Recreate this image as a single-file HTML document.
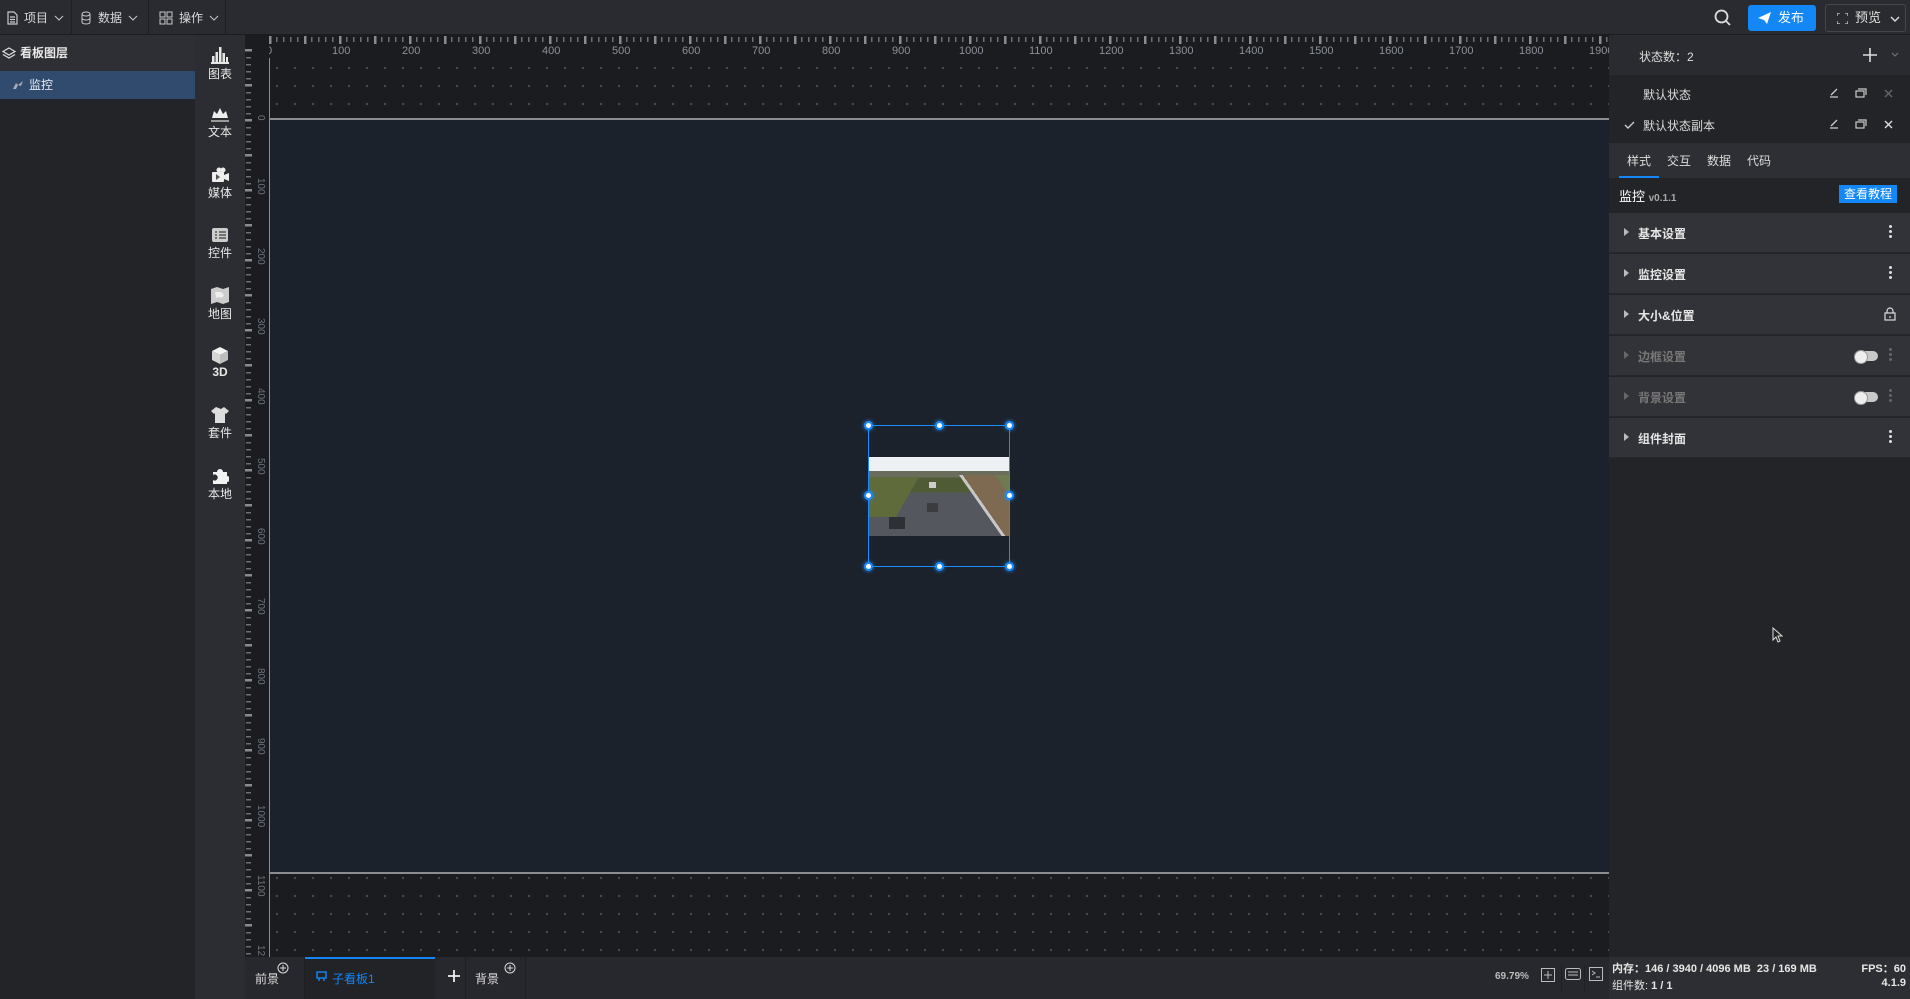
<!DOCTYPE html>
<html><head><meta charset="utf-8"><style>
*{margin:0;padding:0;box-sizing:border-box}
body{width:1910px;height:999px;overflow:hidden;background:#1b1c1f;font-family:"Liberation Sans","Noto Sans CJK SC",sans-serif;font-size:12px;color:#d8d9dc;position:relative}
.abs{position:absolute}
#top{left:0;top:0;width:1910px;height:35px;background:#2a2b30;border-bottom:1px solid #1b1c1f}
.menu{top:0;height:35px;display:flex;align-items:center;gap:6px;color:#d8d9dc;font-size:12px;white-space:nowrap;border-right:1px solid #1f2024;padding-left:6px}
.menu svg{stroke:#c8c9cc;fill:none;flex:none}
#layers{left:0;top:35px;width:195px;height:964px;background:#232427}
#iconbar{left:195px;top:35px;width:50px;height:964px;background:#2c2d32}
.ib{position:absolute;left:0;width:50px;text-align:center;font-size:12px;color:#e8e8e8}
.ib svg{display:block;margin:0 auto 1px}
#hr{left:245px;top:35px;width:1364px;height:22px;background:#1b1c1f}
#vr{left:245px;top:35px;width:24px;height:922px;background:#1b1c1f}
#grid{left:269px;top:57px;width:1340px;height:900px;background-color:#1b1c1f;background-image:radial-gradient(circle,#4a4c50 1px,transparent 1.3px);background-size:18px 18px;background-position:-1px 2px}
#canvas{left:269px;top:118px;width:1340px;height:756px;background:#1c222b;border-top:2px solid #8a8c90;border-bottom:2px solid #8a8c90}
#right{left:1609px;top:35px;width:301px;height:922px;background:#232427}
.sec{position:absolute;left:0;width:301px;height:40px;background:#323338;border-bottom:1px solid #26272b;font-weight:bold;font-size:12px;color:#e6e6e6}
.sec .t{position:absolute;left:29px;top:12px}
.sec .ar{position:absolute;left:15px;top:15px;width:0;height:0;border-left:5px solid #bbb;border-top:4px solid transparent;border-bottom:4px solid transparent}
.dots{position:absolute;right:18px;top:12px;width:3px}
.dots i{display:block;width:3px;height:3px;border-radius:50%;background:#ddd;margin-bottom:2px}
.tog{position:absolute;right:32px;top:15px;width:23px;height:10px;border-radius:5px;background:#c9c9c9}
.tog:before{content:"";position:absolute;left:-1px;top:-1px;width:12px;height:12px;border-radius:50%;background:#eee;border:1px solid #999}
#bot{left:245px;top:957px;width:1364px;height:42px;background:#27282d}
#stat{left:1609px;top:957px;width:301px;height:42px;background:#2d2e33;font-weight:bold;font-size:11px;color:#e6e6e6}
.h{position:absolute;width:9px;height:9px;border-radius:50%;background:#fff;border:2px solid #1a8cff;box-shadow:0 0 4px #1a8cff}
.hl span{position:absolute;top:0}
.vl span{position:absolute;left:0;writing-mode:vertical-rl}
</style></head><body>

<div id="top" class="abs">
 <div class="menu abs" style="left:0;width:72px"><svg width="12" height="14"><path d="M2 1h6l3 3v9H2z M4 6h5M4 8.5h5M4 11h5" stroke-width="1.2"/></svg>项目<svg width="10" height="8"><path d="M1 2l4 4 4-4"/></svg></div>
 <div class="menu abs" style="left:72px;width:77px;padding-left:8px"><svg width="12" height="14"><ellipse cx="6" cy="3" rx="4" ry="2"/><path d="M2 3v8c0 2.6 8 2.6 8 0V3M2 7c0 2.6 8 2.6 8 0"/></svg>数据<svg width="10" height="8"><path d="M1 2l4 4 4-4"/></svg></div>
 <div class="menu abs" style="left:149px;width:77px;padding-left:10px"><svg width="14" height="14"><rect x="1" y="1" width="5" height="5"/><rect x="8" y="1" width="5" height="5"/><rect x="1" y="8" width="5" height="5"/><rect x="8" y="8" width="5" height="5"/></svg>操作<svg width="10" height="8"><path d="M1 2l4 4 4-4"/></svg></div>
 <svg class="abs" style="left:1714px;top:9px" width="17" height="17"><circle cx="7.5" cy="7.5" r="6" stroke="#ddd" stroke-width="1.8" fill="none"/><path d="M12 12l4 4" stroke="#ddd" stroke-width="1.8"/></svg>
 <div class="abs" style="left:1748px;top:5px;width:68px;height:26px;background:#1487f7;border-radius:3px;color:#fff;font-size:13px;line-height:26px;padding-left:30px"><svg class="abs" style="left:10px;top:7px" width="13" height="12"><path d="M0 6L13 0 9 12 6 8z" fill="#fff"/></svg>发布</div>
 <div class="abs" style="left:1825px;top:4px;width:81px;height:28px;border:1px solid #45464b;border-radius:3px;color:#e0e0e0;font-size:13px;line-height:26px;padding-left:29px">预览<svg class="abs" style="left:11px;top:8px" width="11" height="11" fill="none" stroke="#ccc" stroke-width="1.3"><path d="M0 3V0h3M8 0h3v3M11 8v3H8M3 11H0V8"/></svg><svg class="abs" style="left:64px;top:10px" width="10" height="8" fill="none" stroke="#ddd" stroke-width="1.4"><path d="M1 2l4 4 4-4"/></svg></div>
</div>

<div id="layers" class="abs">
 <div class="abs" style="left:0;top:0;width:195px;height:36px;background:#2e2f34;font-weight:bold;font-size:12px;color:#e8e8e8;line-height:36px;padding-left:20px">看板图层<svg class="abs" style="left:2px;top:12px" width="14" height="12" fill="none" stroke="#ddd" stroke-width="1.2"><path d="M7 1l6 3.5-6 3.5-6-3.5z M1 7.5L7 11l6-3.5"/></svg></div>
 <div class="abs" style="left:0;top:36px;width:195px;height:28px;background:#304b6d;color:#e8eef6;font-size:12px;line-height:28px;padding-left:29px">监控<svg class="abs" style="left:12px;top:9px" width="13" height="10" fill="#aab"><path d="M1 9l3-6 2 2 5-4-2 5-3-1-2 4z"/></svg></div>
</div>

<div id="iconbar" class="abs">
 <div class="ib" style="top:12px"><svg width="18" height="17" fill="#e6e6e6"><rect x="1" y="9" width="2.5" height="6"/><rect x="4.5" y="5" width="2.5" height="10"/><rect x="8" y="0" width="2.5" height="15"/><rect x="11.5" y="6" width="2.5" height="9"/><rect x="15" y="10" width="2" height="5"/><rect x="0" y="15" width="18" height="2"/></svg>图表</div>
 <div class="ib" style="top:72px"><svg width="18" height="15" fill="#eee"><path d="M1 11l2-7 3 3 3-6 3 6 3-3 2 7z"/><rect x="0" y="13" width="18" height="2" fill="#999"/></svg>文本</div>
 <div class="ib" style="top:132px"><svg width="18" height="16" fill="#eee"><circle cx="8" cy="3" r="2.5"/><circle cx="12" cy="3" r="2.5"/><rect x="1" y="5" width="12" height="10" rx="1"/><path d="M13 8l5-2v8l-5-2z"/><path d="M5 7v6l4-3z" fill="#555"/></svg>媒体</div>
 <div class="ib" style="top:192px"><svg width="18" height="16"><rect x="1" y="1" width="16" height="14" rx="2" fill="#ccc"/><path d="M4 5h2M8 5h7M4 8h2M8 8h7M4 11h2M8 11h7" stroke="#555" stroke-width="1.4"/></svg>控件</div>
 <div class="ib" style="top:252px"><svg width="18" height="17" fill="#ccc"><path d="M0 2l6-2 6 2 6-2v15l-6 2-6-2-6 2z"/><path d="M4 5h6l3 3-2 3-3-1-3 1z" fill="#eee"/></svg>地图</div>
 <div class="ib" style="top:312px"><svg width="18" height="17"><path d="M9 0l8 4-8 4-8-4z" fill="#f2f2f2"/><path d="M1 4l8 4v9l-8-4z" fill="#d6d6d6"/><path d="M17 4l-8 4v9l8-4z" fill="#bdbdbd"/></svg><b>3D</b></div>
 <div class="ib" style="top:372px"><svg width="18" height="16" fill="#ddd"><path d="M5 0L0 4l3 3 1-1v10h10V6l1 1 3-3-5-4-3 2z"/></svg>套件</div>
 <div class="ib" style="top:432px"><svg width="18" height="17" fill="#f2f2f2"><path d="M2 5h4a3 3 0 1 1 6 0h4v4a3 3 0 1 1 0 6v2H2v-4a3 3 0 1 0 0-5z"/></svg>本地</div>
</div>

<div id="grid" class="abs"></div>
<div id="canvas" class="abs"></div>
<div class="abs" style="left:268px;top:58px;width:2px;height:899px;background:#8a8c90"></div>

<div id="hr" class="abs">
 <div class="abs" style="left:24px;top:2px;width:1340px;height:5px;background:repeating-linear-gradient(90deg,#6e6f73 0 1.5px,transparent 1.5px 7px)"></div>
 <div class="abs" style="left:24px;top:1px;width:1340px;height:8px;background:repeating-linear-gradient(90deg,#8a8b8f 0 2.5px,transparent 2.5px 35px)"></div>
 <div class="abs hl" style="left:0;top:10px;width:1364px;height:14px;color:#8c9098;font-size:11px">
  <span style="left:21px">0</span><span style="left:87px">100</span><span style="left:157px">200</span><span style="left:227px">300</span><span style="left:297px">400</span><span style="left:367px">500</span><span style="left:437px">600</span><span style="left:507px">700</span><span style="left:577px">800</span><span style="left:647px">900</span><span style="left:714px">1000</span><span style="left:784px">1100</span><span style="left:854px">1200</span><span style="left:924px">1300</span><span style="left:994px">1400</span><span style="left:1064px">1500</span><span style="left:1134px">1600</span><span style="left:1204px">1700</span><span style="left:1274px">1800</span><span style="left:1344px">1900</span>
 </div>
</div>
<div id="vr" class="abs">
 <div class="abs" style="left:1px;top:22px;width:5px;height:900px;background:repeating-linear-gradient(180deg,#6e6f73 0 1.5px,transparent 1.5px 7px)"></div>
 <div class="abs" style="left:0;top:14px;width:7px;height:908px;background:repeating-linear-gradient(180deg,#8a8b8f 0 2.5px,transparent 2.5px 35px)"></div>
 <div class="abs vl" style="left:10px;top:0;width:14px;height:922px;color:#6e727a;font-size:10px">
  <span style="top:80px">0</span><span style="top:143px">100</span><span style="top:213px">200</span><span style="top:283px">300</span><span style="top:353px">400</span><span style="top:423px">500</span><span style="top:493px">600</span><span style="top:563px">700</span><span style="top:633px">800</span><span style="top:703px">900</span><span style="top:770px">1000</span><span style="top:840px">1100</span><span style="top:910px">12</span>
 </div>
</div>

<!-- component -->
<div class="abs" style="left:868px;top:425px;width:142px;height:142px;border:1.5px solid #1a8cff"></div>
<div class="abs" style="left:869px;top:457px;width:140px;height:79px;overflow:hidden;background:linear-gradient(180deg,#eef1f4 0 18%,#6a6d5c 18% 26%,#4f5b35 26% 45%,#54585e 45%)">
 <div class="abs" style="left:0;top:20px;width:50px;height:40px;background:#5f6b3a;transform:skewX(-30deg);transform-origin:0 0"></div>
 <div class="abs" style="left:90px;top:18px;width:60px;height:62px;background:linear-gradient(90deg,#c8c8c8 0 6%,#7d6a50 6% 60%,#6f7a50 60%);transform:skewX(35deg);transform-origin:0 0"></div>
 <div class="abs" style="left:20px;top:60px;width:16px;height:12px;background:#2d3035"></div>
 <div class="abs" style="left:58px;top:46px;width:11px;height:9px;background:#3a3c40"></div>
 <div class="abs" style="left:60px;top:25px;width:7px;height:6px;background:#ccc"></div>
</div>
<div class="h" style="left:864px;top:421px"></div><div class="h" style="left:935px;top:421px"></div><div class="h" style="left:1005px;top:421px"></div>
<div class="h" style="left:864px;top:491px"></div><div class="h" style="left:1005px;top:491px"></div>
<div class="h" style="left:864px;top:562px"></div><div class="h" style="left:935px;top:562px"></div><div class="h" style="left:1005px;top:562px"></div>

<!-- right panel -->
<div id="right" class="abs">
 <div class="abs" style="left:0;top:0;width:301px;height:40px;background:#2a2b30"><span class="abs" style="left:30px;top:13px;font-size:12px;color:#ddd">状态数：2</span>
  <svg class="abs" style="left:254px;top:13px" width="14" height="14" stroke="#ddd" stroke-width="1.6"><path d="M7 0v14M0 7h14"/></svg>
  <svg class="abs" style="left:282px;top:17px" width="8" height="6" stroke="#777" fill="none"><path d="M1 1l3 3 3-3"/></svg></div>
 <div class="abs" style="left:0;top:40px;width:301px;height:68px;background:#232427">
  <span class="abs" style="left:34px;top:11px;font-size:12px;color:#ddd">默认状态</span>
  <span class="abs" style="left:34px;top:42px;font-size:12px;color:#ddd">默认状态副本</span>
  <svg class="abs" style="left:15px;top:46px" width="11" height="9" stroke="#ccc" stroke-width="1.4" fill="none"><path d="M1 4l3 3 6-6"/></svg>
  <svg class="abs" style="left:220px;top:13px" width="10" height="10" stroke="#ccc" stroke-width="1.3" fill="none"><path d="M1 9h8M2 7l6-6"/></svg>
  <svg class="abs" style="left:220px;top:44px" width="10" height="10" stroke="#ccc" stroke-width="1.3" fill="none"><path d="M1 9h8M2 7l6-6"/></svg>
  <svg class="abs" style="left:246px;top:13px" width="12" height="10" stroke="#ccc" stroke-width="1.2" fill="none"><rect x="1" y="3" width="8" height="6"/><path d="M3 1h8v6"/></svg>
  <svg class="abs" style="left:246px;top:44px" width="12" height="10" stroke="#ccc" stroke-width="1.2" fill="none"><rect x="1" y="3" width="8" height="6"/><path d="M3 1h8v6"/></svg>
  <svg class="abs" style="left:275px;top:14px" width="9" height="9" stroke="#666" stroke-width="1.4"><path d="M1 1l7 7M8 1l-7 7"/></svg>
  <svg class="abs" style="left:275px;top:45px" width="9" height="9" stroke="#ddd" stroke-width="1.4"><path d="M1 1l7 7M8 1l-7 7"/></svg>
 </div>
 <div class="abs" style="left:0;top:108px;width:301px;height:35px;background:#2e2f34;font-size:12px;color:#ddd">
  <span class="abs" style="left:18px;top:9px">样式</span><span class="abs" style="left:58px;top:9px">交互</span><span class="abs" style="left:98px;top:9px">数据</span><span class="abs" style="left:138px;top:9px">代码</span>
  <div class="abs" style="left:10px;top:33px;width:40px;height:2px;background:#1487f7"></div></div>
 <div class="abs" style="left:0;top:143px;width:301px;height:35px;background:#232427">
  <span class="abs" style="left:10px;top:8px;font-size:13px;color:#fff">监控 <span style="font-size:10px;color:#aaa;font-weight:bold">v0.1.1</span></span>
  <div class="abs" style="left:230px;top:7px;width:58px;height:18px;background:#1487f7;color:#fff;font-size:12px;line-height:18px;text-align:center">查看教程</div></div>
 <div class="sec" style="top:178px"><i class="ar"></i><span class="t">基本设置</span><div class="dots"><i></i><i></i><i></i></div></div>
 <div class="sec" style="top:219px"><i class="ar"></i><span class="t">监控设置</span><div class="dots"><i></i><i></i><i></i></div></div>
 <div class="sec" style="top:260px"><i class="ar"></i><span class="t">大小&amp;位置</span><svg class="abs" style="right:14px;top:12px" width="12" height="14" stroke="#ddd" fill="none" stroke-width="1.2"><rect x="1" y="6" width="10" height="7"/><path d="M3 6V4a3 3 0 0 1 6 0v2M6 9v2"/></svg></div>
 <div class="sec" style="top:301px;color:#777"><i class="ar" style="border-left-color:#666"></i><span class="t">边框设置</span><div class="tog"></div><div class="dots"><i style="background:#666"></i><i style="background:#666"></i><i style="background:#666"></i></div></div>
 <div class="sec" style="top:342px;color:#777"><i class="ar" style="border-left-color:#666"></i><span class="t">背景设置</span><div class="tog"></div><div class="dots"><i style="background:#666"></i><i style="background:#666"></i><i style="background:#666"></i></div></div>
 <div class="sec" style="top:383px"><i class="ar"></i><span class="t">组件封面</span><div class="dots"><i></i><i></i><i></i></div></div>
</div>

<!-- bottom bar -->
<div id="bot" class="abs">
 <div class="abs" style="left:0;top:0;width:60px;height:42px;border-right:1px solid #1f2024"><span class="abs" style="left:10px;top:13px;color:#ddd">前景</span><svg class="abs" style="left:32px;top:5px" width="12" height="12" stroke="#ddd" fill="none"><circle cx="6" cy="6" r="5"/><path d="M6 3v6M3 6h6"/></svg></div>
 <div class="abs" style="left:60px;top:0;width:130px;height:42px;background:#222327;border-top:2px solid #1487f7"><svg class="abs" style="left:11px;top:12px" width="11" height="11" stroke="#1487f7" fill="none" stroke-width="1.4"><rect x="1" y="1" width="9" height="6"/><path d="M3 7v3M8 7v3"/></svg><span class="abs" style="left:27px;top:11px;color:#1487f7">子看板1</span></div>
 <svg class="abs" style="left:203px;top:13px" width="12" height="12" stroke="#eee" stroke-width="1.8"><path d="M6 0v12M0 6h12"/></svg>
 <div class="abs" style="left:220px;top:0;width:1px;height:42px;background:#1f2024"></div>
 <div class="abs" style="left:221px;top:0;width:60px;height:42px;border-right:1px solid #1f2024"><span class="abs" style="left:9px;top:13px;color:#ddd">背景</span><svg class="abs" style="left:38px;top:5px" width="12" height="12" stroke="#ddd" fill="none"><circle cx="6" cy="6" r="5"/><path d="M6 3v6M3 6h6"/></svg></div>
 <span class="abs" style="left:1250px;top:14px;font-size:10px;font-weight:bold;color:#bbb">69.79%</span>
 <svg class="abs" style="left:1296px;top:11px" width="14" height="14" stroke="#bbb" fill="none"><rect x="0.5" y="0.5" width="13" height="13"/><path d="M7 3v8M3 7h8"/></svg>
 <div class="abs" style="left:1316px;top:8px;width:1px;height:26px;background:#1f2024"></div>
 <svg class="abs" style="left:1320px;top:11px" width="16" height="12" stroke="#bbb" fill="none"><rect x="0.5" y="0.5" width="15" height="11" rx="2"/><path d="M3 4h10M3 7h10"/></svg>
 <div class="abs" style="left:1339px;top:8px;width:1px;height:26px;background:#1f2024"></div>
 <svg class="abs" style="left:1344px;top:10px" width="14" height="14"><rect x="0.5" y="0.5" width="13" height="13" fill="none" stroke="#bbb"/><path d="M3 4l3 2-3 2M7 10h4" stroke="#bbb" fill="none"/></svg>
</div>
<div id="stat" class="abs">
 <span class="abs" style="left:3px;top:3px">内存：146 / 3940 / 4096 MB&nbsp; 23 / 169 MB</span>
 <span class="abs" style="right:4px;top:3px">FPS：60</span>
 <span class="abs" style="left:3px;top:20px;font-weight:normal">组件数:<b> 1 / 1</b></span>
 <span class="abs" style="right:4px;top:20px">4.1.9</span>
</div>
<svg class="abs" style="left:1772px;top:627px" width="12" height="16"><path d="M1 1v12l3-3 2 5 2-1-2-5h4z" fill="#222" stroke="#ddd"/></svg>
</body></html>
